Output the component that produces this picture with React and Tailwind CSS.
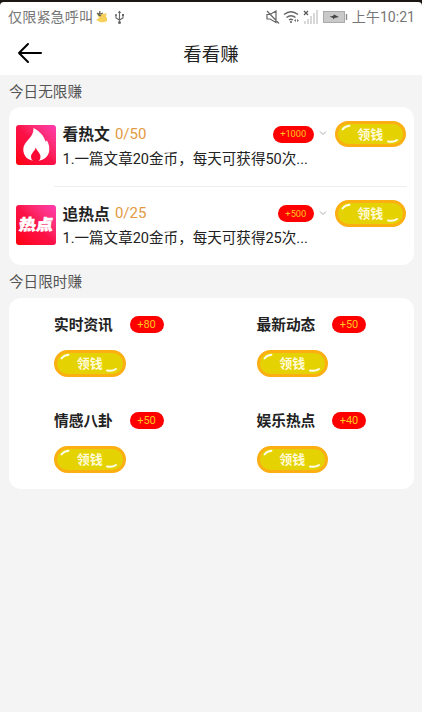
import React from "react";

function ClaimButton() {
  return (
    <button className="relative flex h-[26.5px] w-[71.5px] shrink-0 items-center justify-center rounded-full border-[3px] border-[#fbaf12] bg-[#e5d203] text-[13px] leading-none font-bold text-[#fffbd8]">
      <svg className="absolute -top-[3px] -left-[3px]" width="72" height="27" viewBox="0 0 72 27" fill="none" stroke="#fffef0" strokeWidth="1.9" strokeLinecap="round">
        <path d="M7.5 8.5Q10 5.4 14.5 4.8" />
        <path d="M53 20.5Q58.5 21.5 62 19" />
      </svg>
      <span>领钱</span>
    </button>
  );
}

function Badge({ children, small }) {
  return (
    <span className={"flex h-[17px] shrink-0 items-center justify-center rounded-full bg-[#fe0000] leading-none text-[#ffc420] " + (small ? "px-[7.2px] text-[9.3px]" : "w-[34px] text-[11px]")}>
      {children}
    </span>
  );
}

function FlameIcon() {
  return (
    <svg width="40" height="40" viewBox="0 0 40 40" className="block">
      <path d="M17.5 3C23.5 6 28 11 29.5 16.5C30 16.5 30.5 16 31 15.5C33 19 33.800 23 33 27C31.500 32.500 27 36 20 36C12 36 7 31 7.300 24C7.500 16 18 13 17.500 3Z" fill="#fff" />
      <path d="M19.8 22.500C19 26 15 28 15 32C15 35 17 36.500 19.500 36.500C22.500 36.500 24.500 35 24.500 32C24.500 28 20.800 26 19.800 22.500Z" fill="#f80a35" />
    </svg>
  );
}

function TaskRow({ icon, title, count, reward, desc }) {
  return (
    <div className="flex h-[79.5px] pt-[13.5px] pr-[8px] pl-[7px]">
      <div className="mt-[4.5px] flex h-10 w-10 shrink-0 items-center justify-center overflow-hidden rounded-[3px] bg-linear-to-tr from-[#ff0000] via-[#fb1147] to-[#ff3caf]">
        {icon}
      </div>
      <div className="ml-[6.5px] min-w-0 flex-1">
        <div className="flex h-[27px] items-center">
          <span className="relative top-px text-[15.8px] leading-none font-bold">{title}</span>
          <span className="ml-[5px] flex-1 text-[15px] leading-none text-[#e29a43]">{count}</span>
          <Badge small>{reward}</Badge>
          <svg className="-mt-[2px] mr-[8px] ml-[5px]" width="8" height="6" viewBox="0 0 8 6" fill="none" stroke="#aaa" strokeWidth="1">
            <path d="M1 1.5L4 4.5L7 1.5" />
          </svg>
          <ClaimButton />
        </div>
        <p className="mt-[2px] text-[14.55px] leading-[20px] whitespace-nowrap">{desc}</p>
      </div>
    </div>
  );
}

const timed = [
  ["实时资讯", "+80"],
  ["最新动态", "+50"],
  ["情感八卦", "+50"],
  ["娱乐热点", "+40"],
];

function StatusBar() {
  return (
    <div className="h-[32px] bg-[#1b1715] pt-[2px]">
      <div className="flex h-[30px] items-center rounded-t-[4px] bg-white pr-[7px] pl-[8px] text-[14px] text-[#777]">
        <span className="text-[14.2px] leading-none">仅限紧急呼叫</span>
        <svg className="ml-[3px]" width="12" height="12" viewBox="0 0 12 12">
          <path d="M1 3Q4 0 7 3L11 2Q9 5 11 7V10Q8 12 4 11L0 9L3 7Z" fill="#f6d058" />
          <path d="M1 2L5 5M4 0L3 5M7 2L2 4" stroke="#65645f" strokeWidth="1.3" />
        </svg>
        <svg className="ml-[6px]" width="11" height="15" viewBox="0 0 11 15" fill="none" stroke="#666" strokeWidth="1.1">
          <path d="M5.500 2V12M2 5V8L5.500 10L9 8V5" />
          <path d="M3.800 3L5.500 0.500L7.200 3Z" fill="#666" stroke="none" />
          <circle cx="5.5" cy="12.5" r="1.5" fill="#666" stroke="none" />
          <circle cx="2" cy="5" r="1" fill="#666" stroke="none" />
          <path d="M8 4H10V6H8Z" fill="#666" stroke="none" />
        </svg>
        <div className="flex-1" />
        <svg width="14" height="14" viewBox="0 0 14 14" fill="none" stroke="#666" strokeWidth="1.2">
          <path d="M1 4.500H4L10 1V12.500L4 9H1ZM1 1L13 13.500" />
        </svg>
        <svg className="ml-[3px]" width="17" height="14" viewBox="0 0 17 14" fill="none" stroke="#666" strokeWidth="1.5">
          <path d="M1 4.500Q8 -1 15 4.500M3.500 7.500Q8 4 12.500 7.500M6 10Q8 8.500 10 10" />
          <circle cx="8" cy="12" r="1.1" fill="#666" stroke="none" />
          <path d="M11 10.500L13 9V12ZM14 9L16 10.500L14 12Z" fill="#777" stroke="none" />
        </svg>
        <svg className="ml-[2.5px]" width="15" height="14" viewBox="0 0 15 14" fill="none">
          <path d="M1 1L5 5M5 1L1 5" stroke="#555" strokeWidth="1.2" />
          <path d="M2 11V14M5 9V14M8 6V14M11 3V14M14 0V14" stroke="#ccc" strokeWidth="1.5" />
        </svg>
        <svg className="ml-[5px]" width="25" height="12" viewBox="0 0 25 12">
          <rect x="0.5" y="0.5" width="21" height="11" fill="#c9c9c9" stroke="#aaa" />
          <path d="M23.500 3V9" stroke="#888" strokeWidth="1.4" />
          <path d="M6.500 5.500L10 5L11 3.500L16 6L11.500 7L10.500 8.500L10 7Z" fill="#444" />
        </svg>
        <span className="ml-[4px] text-[14.1px] leading-none">上午10:21</span>
      </div>
    </div>
  );
}

export default function App() {
  return (
    <div className="h-[712px] w-[422px] overflow-hidden bg-[#f4f4f4] font-['Roboto','Noto_Sans_CJK_SC',sans-serif] text-[#222]">
      <StatusBar />
      <header className="grid h-[43px] grid-cols-[60px_1fr_60px] items-center bg-white">
        <svg className="-mt-[2px] ml-[17px]" width="26" height="22" viewBox="0 0 26 22" fill="none" stroke="#000" strokeWidth="2" strokeLinecap="round" strokeLinejoin="round">
          <path d="M24 11H2M11 2L2 11L11 20" />
        </svg>
        <h1 className="pt-[4px] text-center text-[18.5px] leading-none">看看赚</h1>
      </header>
      <h2 className="flex h-[32px] items-center pt-[2px] pl-[9px] text-[14.6px] leading-none text-[#555]">今日无限赚</h2>
      <section className="mr-[8px] ml-[9px] h-[158px] rounded-[12px] bg-white">
        <TaskRow icon={<FlameIcon />} title="看热文" count="0/50" reward="+1000" desc="1.一篇文章20金币，每天可获得50次..." />
        <div className="-mt-px mr-[7px] ml-[45px] h-px bg-[#eee]" />
        <TaskRow
          icon={<span className="mt-[2px] -skew-x-6 scale-y-90 text-[17px] leading-none font-black text-white [-webkit-text-stroke:0.6px_white]">热点</span>}
          title="追热点"
          count="0/25"
          reward="+500"
          desc="1.一篇文章20金币，每天可获得25次..."
        />
      </section>
      <h2 className="flex h-[33px] items-center pt-[2px] pl-[9px] text-[14.6px] leading-none text-[#555]">今日限时赚</h2>
      <section className="mr-[8px] ml-[9px] grid h-[191px] grid-cols-2 grid-rows-[96px_95px] rounded-[12px] bg-white">
        {timed.map(([title, reward]) => (
          <div key={title} className="pt-[18px] pl-[45px]">
            <div className="flex h-[17px] items-center">
              <span className="w-[75.5px] pt-[2px] text-[14.7px] leading-none font-bold">{title}</span>
              <Badge>{reward}</Badge>
            </div>
            <div className="mt-[17px]">
              <ClaimButton />
            </div>
          </div>
        ))}
      </section>
    </div>
  );
}
